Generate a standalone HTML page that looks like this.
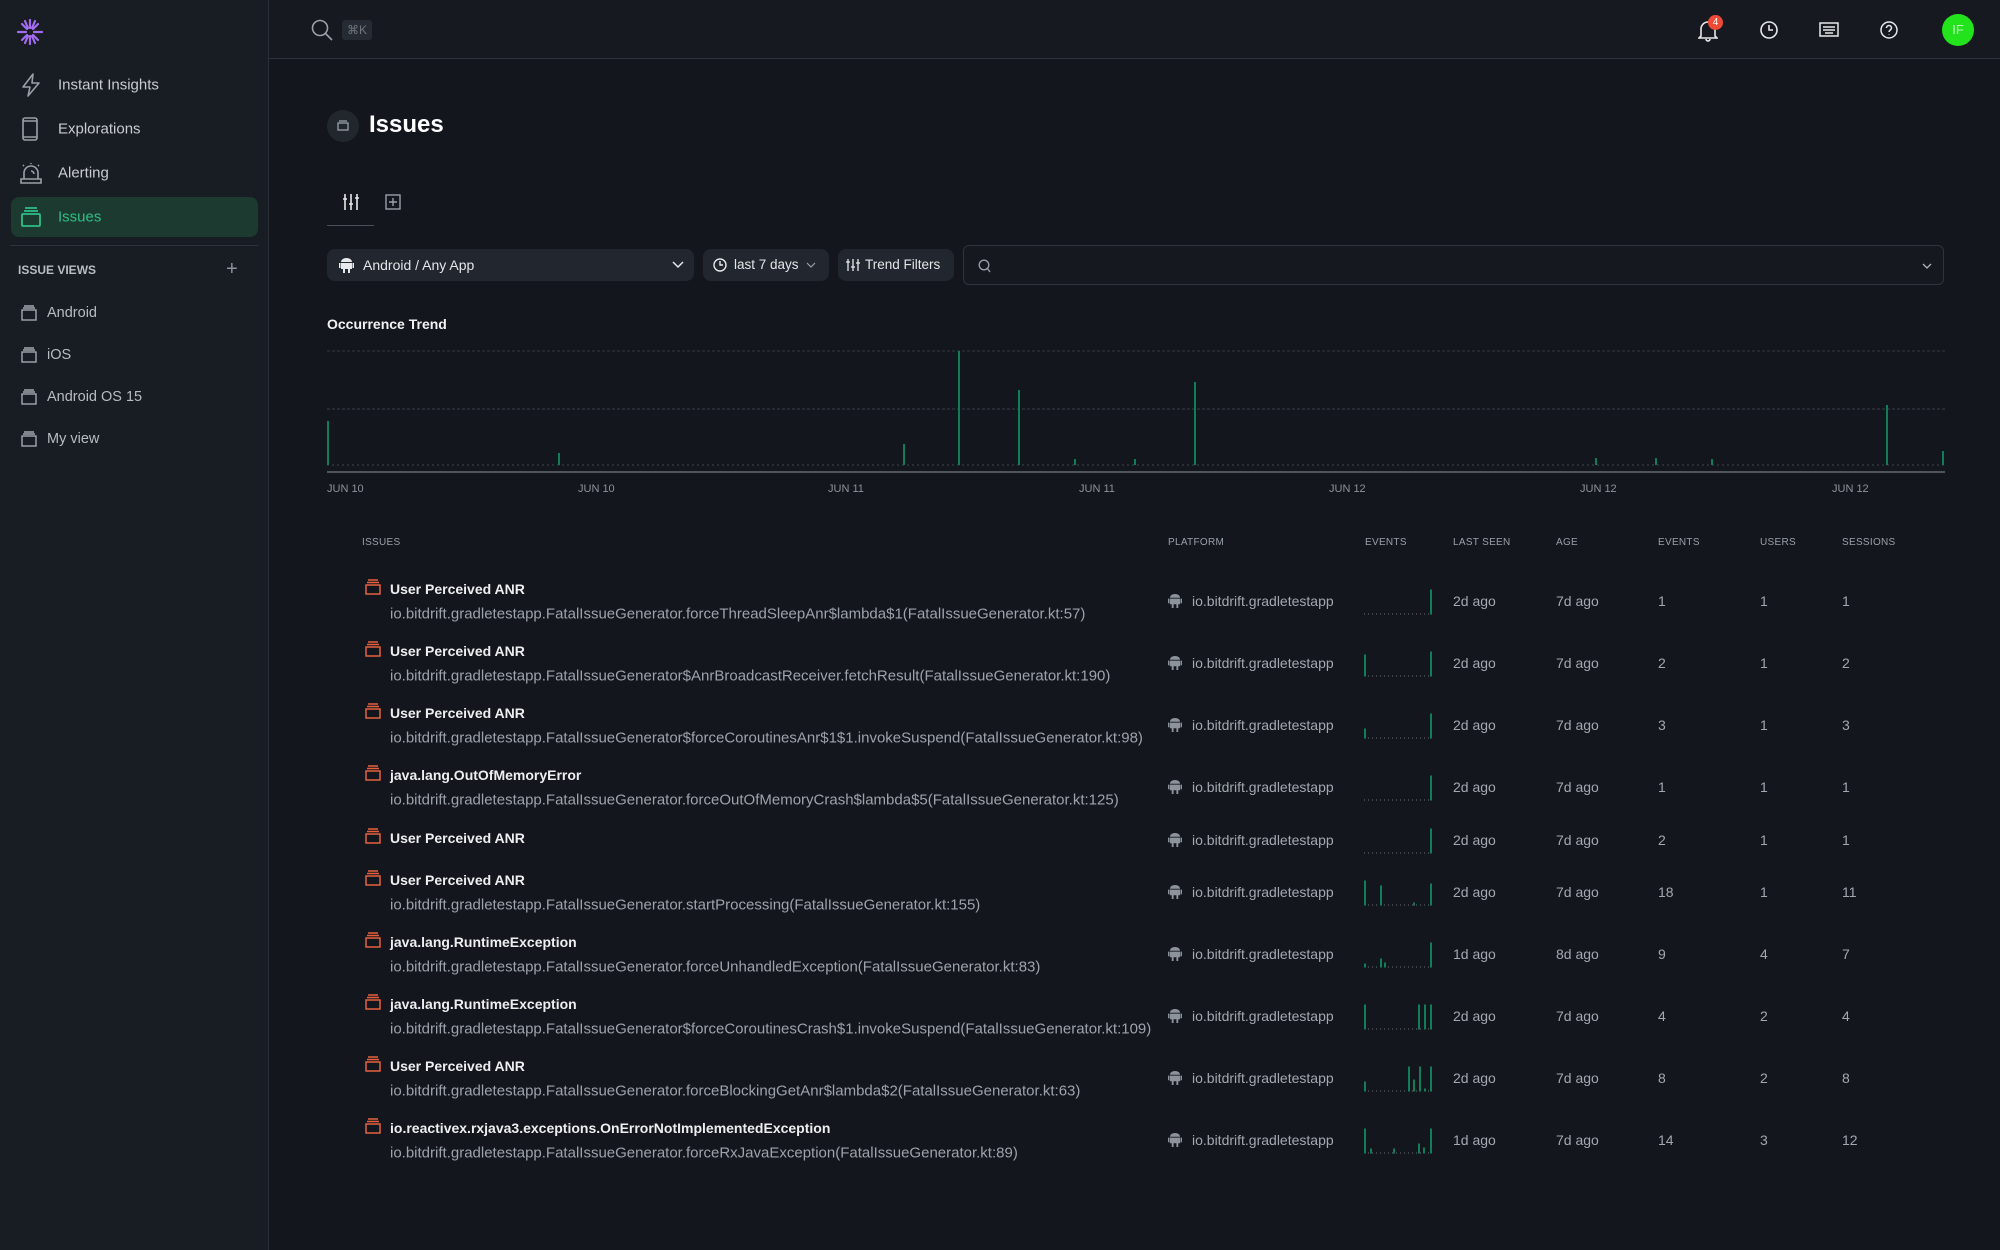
<!DOCTYPE html>
<html><head><meta charset="utf-8"><style>
*{box-sizing:border-box;margin:0;padding:0}
body{width:2000px;height:1250px;background:#13161c;font-family:"Liberation Sans",sans-serif;color:#e6e8eb;position:relative;overflow:hidden}
.abs{position:absolute}
#side{left:0;top:0;width:269px;height:1250px;background:#181c23;border-right:1px solid #2a2f37}
#top{left:269px;top:0;right:0;height:59px;border-bottom:1px solid #2c3139;background:#161a20}
.nav{position:absolute;left:58px;font-size:15px;color:#c9ccd1;transform:translateY(-50%)}
.navi{position:absolute;left:20px;transform:translateY(-50%)}
.view{position:absolute;left:47px;font-size:14.5px;color:#b8bcc2;transform:translateY(-50%)}
.vi{position:absolute;left:21px;transform:translateY(-50%)}
.hdr{position:absolute;top:537px;font-size:10px;color:#9aa0a8;letter-spacing:.3px}
.t{position:absolute;left:390px;font-size:14px;font-weight:bold;color:#eceef0;transform:translateY(-50%);white-space:nowrap}
.s{position:absolute;left:390px;font-size:15px;color:#9da3ab;transform:translateY(-50%);white-space:nowrap}
.ic{position:absolute;left:365px;transform:translateY(-50%)}
.c{position:absolute;font-size:14px;color:#a3a8b0;transform:translateY(-50%);white-space:nowrap}
.lbl{position:absolute;top:483px;font-size:11px;color:#8d939b}
.pill{position:absolute;background:#22272f;border-radius:8px;font-size:14px;color:#e3e5e8;white-space:nowrap}
</style></head><body>
<div id="side" class="abs">
  <svg class="abs" style="left:15px;top:17px" width="30" height="30" viewBox="0 0 30 30" stroke-width="2.2" stroke-linecap="round"><path d="M15 3v8M15 19v8M3 15h8M19 15h8M7 7l5 5M18 18l5 5M23 7l-5 5M12 18l-5 5M10 4l3 7M20 4l-3 7M10 26l3-7M20 26l-3-7" stroke="#a26bf0"/></svg>
  <svg class="navi" style="top:85px" width="22" height="24" viewBox="0 0 22 24" fill="none" stroke="#9aa0a8" stroke-width="1.6" stroke-linejoin="round"><path d="M13 1L3 14h7l-2 9 11-13h-7z"/></svg>
  <div class="nav" style="top:85px">Instant Insights</div>
  <svg class="navi" style="top:129px;left:22px" width="16" height="24" viewBox="0 0 16 24" fill="none" stroke="#9aa0a8" stroke-width="1.6"><rect x="1" y="1" width="14" height="22" rx="2"/><path d="M1 4h14M1 20h14"/></svg>
  <div class="nav" style="top:129px">Explorations</div>
  <svg class="navi" style="top:173px" width="22" height="24" viewBox="0 0 22 24" fill="none" stroke="#9aa0a8" stroke-width="1.6"><path d="M4 18v-6a7 7 0 0114 0v6M1 18h20v4H1zM11 2v1M3 4l1 1M19 4l-1 1M11 10a3 3 0 013 3"/></svg>
  <div class="nav" style="top:173px">Alerting</div>
  <div class="abs" style="left:11px;top:197px;width:247px;height:40px;background:#1c3a30;border-radius:8px"></div>
  <svg class="navi" style="top:217px;left:21px" width="20" height="20" viewBox="0 0 20 20" fill="none" stroke="#2fbf86" stroke-width="1.8"><rect x="1" y="7" width="18" height="12" rx="1"/><path d="M3 4h14M4 1h12"/></svg>
  <div class="nav" style="top:217px;color:#2fbf86">Issues</div>
  <div class="abs" style="left:10px;top:245px;width:248px;height:1px;background:#2e333b"></div>
  <div class="abs" style="left:18px;top:263px;font-size:12px;font-weight:bold;color:#b9bdc3">ISSUE VIEWS</div>
  <div class="abs" style="left:226px;top:259px;font-size:20px;color:#8d939b;line-height:20px">+</div>
  <svg class="vi" style="top:313px" width="16" height="16" viewBox="0 0 16 16" fill="none" stroke="#a3a8b0" stroke-width="1.4"><rect x="1" y="5" width="14" height="10"/><path d="M2 3h12M3 1h10"/></svg><div class="view" style="top:313px">Android</div>
  <svg class="vi" style="top:355px" width="16" height="16" viewBox="0 0 16 16" fill="none" stroke="#a3a8b0" stroke-width="1.4"><rect x="1" y="5" width="14" height="10"/><path d="M2 3h12M3 1h10"/></svg><div class="view" style="top:355px">iOS</div>
  <svg class="vi" style="top:397px" width="16" height="16" viewBox="0 0 16 16" fill="none" stroke="#a3a8b0" stroke-width="1.4"><rect x="1" y="5" width="14" height="10"/><path d="M2 3h12M3 1h10"/></svg><div class="view" style="top:397px">Android OS 15</div>
  <svg class="vi" style="top:439px" width="16" height="16" viewBox="0 0 16 16" fill="none" stroke="#a3a8b0" stroke-width="1.4"><rect x="1" y="5" width="14" height="10"/><path d="M2 3h12M3 1h10"/></svg><div class="view" style="top:439px">My view</div>
</div>
<div id="top" class="abs"></div>
<svg class="abs" style="left:311px;top:19px" width="22" height="22" viewBox="0 0 22 22" fill="none" stroke="#9aa0a8" stroke-width="1.6"><circle cx="9" cy="9" r="7.5"/><path d="M14.5 14.5L21 21"/></svg>
<div class="abs" style="left:342px;top:20px;width:30px;height:20px;background:#262b33;border-radius:3px;font-size:12px;color:#6f757d;text-align:center;line-height:20px">⌘K</div>
<svg class="abs" style="left:1698px;top:18px" width="20" height="24" viewBox="0 0 20 24" fill="none" stroke="#e6e8eb" stroke-width="1.6"><path d="M3 18V11a7 7 0 0114 0v7l2 2H1zM8 21a2 2 0 004 0"/></svg>
<div class="abs" style="left:1708px;top:15px;width:15px;height:15px;border-radius:50%;background:#ef4a35;color:#fff;font-size:10px;text-align:center;line-height:15px">4</div>
<svg class="abs" style="left:1759px;top:20px" width="20" height="20" viewBox="0 0 20 20" fill="none" stroke="#e6e8eb" stroke-width="1.6"><circle cx="10" cy="10" r="8"/><path d="M10 5v5h4"/></svg>
<svg class="abs" style="left:1819px;top:22px" width="20" height="15" viewBox="0 0 20 15" fill="none" stroke="#e6e8eb" stroke-width="1.5"><rect x="1" y="1" width="18" height="13"/><path d="M4 5h12M4 8h12M6 11h8"/></svg>
<svg class="abs" style="left:1879px;top:20px" width="20" height="20" viewBox="0 0 20 20" fill="none" stroke="#e6e8eb" stroke-width="1.5"><circle cx="10" cy="10" r="8"/><path d="M7.5 8a2.5 2.5 0 115 0c0 2-2.5 2-2.5 4M10 14.5v.5"/></svg>
<div class="abs" style="left:1942px;top:14px;width:32px;height:32px;border-radius:50%;background:#22e31c;color:#bff5bd;font-size:13px;text-align:center;line-height:32px">IF</div>

<div class="abs" style="left:327px;top:110px;width:32px;height:32px;border-radius:50%;background:#22272e"></div>
<svg class="abs" style="left:337px;top:119px" width="12" height="12" viewBox="0 0 12 12" fill="none" stroke="#9aa0a8" stroke-width="1.3"><rect x="1" y="4" width="10" height="7"/><path d="M2 2h8"/></svg>
<div class="abs" style="left:369px;top:111px;font-size:24px;font-weight:bold;color:#fff">Issues</div>

<svg class="abs" style="left:342px;top:193px" width="18" height="18" viewBox="0 0 18 18" fill="none" stroke="#e6e8eb" stroke-width="1.6"><path d="M3 1v16M9 1v16M15 1v16M1 6h4M7 11h4M13 5h4"/></svg>
<svg class="abs" style="left:385px;top:194px" width="16" height="16" viewBox="0 0 16 16" fill="none" stroke="#9aa0a8" stroke-width="1.4"><rect x="1" y="1" width="14" height="14"/><path d="M8 4v8M4 8h8"/></svg>
<div class="abs" style="left:327px;top:225px;width:47px;height:1px;background:#4a5058"></div>

<div class="pill" style="left:327px;top:249px;width:367px;height:32px">
 <svg class="abs" style="left:12px;top:8px" width="15" height="16" viewBox="0 0 15 16" fill="#e6e8eb"><path d="M2 6h11v6H2zM2 5a5.5 4 0 0111 0zM0 6h1.5v5H0zM13.5 6H15v5h-1.5zM4 12h2v4H4zM9 12h2v4H9z"/></svg>
 <span class="abs" style="left:36px;top:8px">Android / Any App</span>
 <svg class="abs" style="left:345px;top:12px" width="12" height="8" viewBox="0 0 12 8" fill="none" stroke="#e6e8eb" stroke-width="1.5"><path d="M1 1l5 5 5-5"/></svg>
</div>
<div class="pill" style="left:703px;top:249px;width:126px;height:32px;font-size:13.5px">
 <svg class="abs" style="left:10px;top:9px" width="14" height="14" viewBox="0 0 14 14" fill="none" stroke="#e6e8eb" stroke-width="1.4"><circle cx="7" cy="7" r="6"/><path d="M7 3v4h3"/></svg>
 <span class="abs" style="left:31px;top:8px">last 7 days</span>
 <svg class="abs" style="left:103px;top:13px" width="10" height="6" viewBox="0 0 10 6" fill="none" stroke="#9aa0a8" stroke-width="1.2"><path d="M1 1l4 4 4-4"/></svg>
</div>
<div class="pill" style="left:838px;top:249px;width:116px;height:32px;font-size:13.5px">
 <svg class="abs" style="left:8px;top:9px" width="14" height="14" viewBox="0 0 14 14" fill="none" stroke="#e6e8eb" stroke-width="1.3"><path d="M2 1v12M7 1v12M12 1v12M0 4h4M5 9h4M10 5h4"/></svg>
 <span class="abs" style="left:27px;top:8px">Trend Filters</span>
</div>
<div class="abs" style="left:963px;top:245px;width:981px;height:40px;border:1px solid #2f343c;border-radius:6px;background:#15191f">
 <svg class="abs" style="left:14px;top:13px" width="13" height="14" viewBox="0 0 13 14" fill="none" stroke="#9aa0a8" stroke-width="1.3"><circle cx="6" cy="6" r="4.8"/><path d="M9.5 9.5L12 13"/></svg>
 <svg class="abs" style="left:958px;top:17px" width="10" height="6" viewBox="0 0 10 6" fill="none" stroke="#b0b5bc" stroke-width="1.3"><path d="M1 1l4 4 4-4"/></svg>
</div>

<div class="abs" style="left:327px;top:316px;font-size:14px;font-weight:bold;color:#f1f2f4">Occurrence Trend</div>
<svg class="abs" style="left:327px;top:345px" width="1618" height="130" viewBox="0 0 1618 130">
 <line x1="0" y1="6" x2="1618" y2="6" stroke="#343941" stroke-dasharray="3 2"/>
 <line x1="0" y1="64" x2="1618" y2="64" stroke="#3a3f47" stroke-dasharray="3 2"/>
 <line x1="0" y1="120" x2="1618" y2="120" stroke="#3f444c" stroke-dasharray="2 3"/>
 <line x1="0" y1="127" x2="1618" y2="127" stroke="#50555c" stroke-width="2"/>
 <g stroke="#107d59" stroke-width="2">
  <line x1="1" y1="120" x2="1" y2="76"/><line x1="232" y1="120" x2="232" y2="108"/><line x1="577" y1="120" x2="577" y2="99"/>
  <line x1="632" y1="120" x2="632" y2="6"/><line x1="692" y1="120" x2="692" y2="45"/><line x1="748" y1="120" x2="748" y2="114"/>
  <line x1="808" y1="120" x2="808" y2="114"/><line x1="868" y1="120" x2="868" y2="37"/><line x1="1269" y1="120" x2="1269" y2="113"/>
  <line x1="1329" y1="120" x2="1329" y2="113"/><line x1="1385" y1="120" x2="1385" y2="114"/><line x1="1560" y1="120" x2="1560" y2="60"/>
  <line x1="1616" y1="120" x2="1616" y2="106"/>
 </g>
</svg>
<div class="lbl" style="left:327px">JUN 10</div><div class="lbl" style="left:578px">JUN 10</div><div class="lbl" style="left:828px">JUN 11</div><div class="lbl" style="left:1079px">JUN 11</div><div class="lbl" style="left:1329px">JUN 12</div><div class="lbl" style="left:1580px">JUN 12</div><div class="lbl" style="left:1832px">JUN 12</div>

<div class="hdr" style="left:362px">ISSUES</div><div class="hdr" style="left:1168px">PLATFORM</div><div class="hdr" style="left:1365px">EVENTS</div><div class="hdr" style="left:1453px">LAST SEEN</div><div class="hdr" style="left:1556px">AGE</div><div class="hdr" style="left:1658px">EVENTS</div><div class="hdr" style="left:1760px">USERS</div><div class="hdr" style="left:1842px">SESSIONS</div>

<svg width="0" height="0" style="position:absolute"><defs>
<symbol id="iss" viewBox="0 0 16 16"><g fill="none" stroke="#e5603f" stroke-width="1.5"><rect x="1" y="6" width="14" height="9"/><path d="M2 3.5h12M3 1h10"/></g></symbol>
<symbol id="and" viewBox="0 0 15 16"><path fill="#8d939b" d="M2 6h11v6H2zM2 5a5.5 4 0 0111 0zM0 6h1.5v5H0zM13.5 6H15v5h-1.5zM4 12h2v4H4zM9 12h2v4H9z"/></symbol>
</defs></svg>

<div id="rows"></div>
<script>
var R=[
["User Perceived ANR","io.bitdrift.gradletestapp.FatalIssueGenerator.forceThreadSleepAnr$lambda$1(FatalIssueGenerator.kt:57)","2d ago","7d ago","1","1","1",[[67,25]],589],
["User Perceived ANR","io.bitdrift.gradletestapp.FatalIssueGenerator$AnrBroadcastReceiver.fetchResult(FatalIssueGenerator.kt:190)","2d ago","7d ago","2","1","2",[[1,22],[67,25]],651],
["User Perceived ANR","io.bitdrift.gradletestapp.FatalIssueGenerator$forceCoroutinesAnr$1$1.invokeSuspend(FatalIssueGenerator.kt:98)","2d ago","7d ago","3","1","3",[[1,10],[67,25]],713],
["java.lang.OutOfMemoryError","io.bitdrift.gradletestapp.FatalIssueGenerator.forceOutOfMemoryCrash$lambda$5(FatalIssueGenerator.kt:125)","2d ago","7d ago","1","1","1",[[67,25]],775],
["User Perceived ANR","","2d ago","7d ago","2","1","1",[[67,25]],838],
["User Perceived ANR","io.bitdrift.gradletestapp.FatalIssueGenerator.startProcessing(FatalIssueGenerator.kt:155)","2d ago","7d ago","18","1","11",[[1,25],[17,20],[50,3],[67,22]],880],
["java.lang.RuntimeException","io.bitdrift.gradletestapp.FatalIssueGenerator.forceUnhandledException(FatalIssueGenerator.kt:83)","1d ago","8d ago","9","4","7",[[1,4],[17,9],[21,5],[67,25]],942],
["java.lang.RuntimeException","io.bitdrift.gradletestapp.FatalIssueGenerator$forceCoroutinesCrash$1.invokeSuspend(FatalIssueGenerator.kt:109)","2d ago","7d ago","4","2","4",[[1,25],[55,25],[61,25],[67,25]],1004],
["User Perceived ANR","io.bitdrift.gradletestapp.FatalIssueGenerator.forceBlockingGetAnr$lambda$2(FatalIssueGenerator.kt:63)","2d ago","7d ago","8","2","8",[[1,10],[45,25],[50,12],[56,25],[61,3],[67,25]],1066],
["io.reactivex.rxjava3.exceptions.OnErrorNotImplementedException","io.bitdrift.gradletestapp.FatalIssueGenerator.forceRxJavaException(FatalIssueGenerator.kt:89)","1d ago","7d ago","14","3","12",[[1,25],[7,5],[30,5],[55,10],[60,6],[67,25]],1128]];
var h="";
R.forEach(function(r,i){var t=r[8];var c=r[1]?t+12:t+2;
h+='<svg class="ic" style="top:'+(t-2)+'px" width="16" height="16"><use href="#iss"/></svg>';
h+='<div class="t" style="top:'+t+'px">'+r[0]+'</div>';
if(r[1])h+='<div class="s" style="top:'+(t+25)+'px">'+r[1]+'</div>';
h+='<svg class="abs" style="left:1168px;top:'+(c-8)+'px" width="14" height="15"><use href="#and"/></svg>';
h+='<div class="c" style="left:1192px;top:'+c+'px">io.bitdrift.gradletestapp</div>';
var s='<svg class="abs" style="left:1364px;top:'+(c-13)+'px" width="70" height="27" viewBox="0 0 70 27"><line x1="0" y1="26" x2="68" y2="26" stroke="#6a7078" stroke-dasharray="1 3"/>';
r[7].forEach(function(b){s+='<line x1="'+b[0]+'" y1="26.5" x2="'+b[0]+'" y2="'+(26.5-b[1])+'" stroke="#117d59" stroke-width="2"/>';});
h+=s+'</svg>';
h+='<div class="c" style="left:1453px;top:'+c+'px">'+r[2]+'</div><div class="c" style="left:1556px;top:'+c+'px">'+r[3]+'</div><div class="c" style="left:1658px;top:'+c+'px">'+r[4]+'</div><div class="c" style="left:1760px;top:'+c+'px">'+r[5]+'</div><div class="c" style="left:1842px;top:'+c+'px">'+r[6]+'</div>';
});
document.getElementById("rows").innerHTML=h;
</script>
</body></html>
